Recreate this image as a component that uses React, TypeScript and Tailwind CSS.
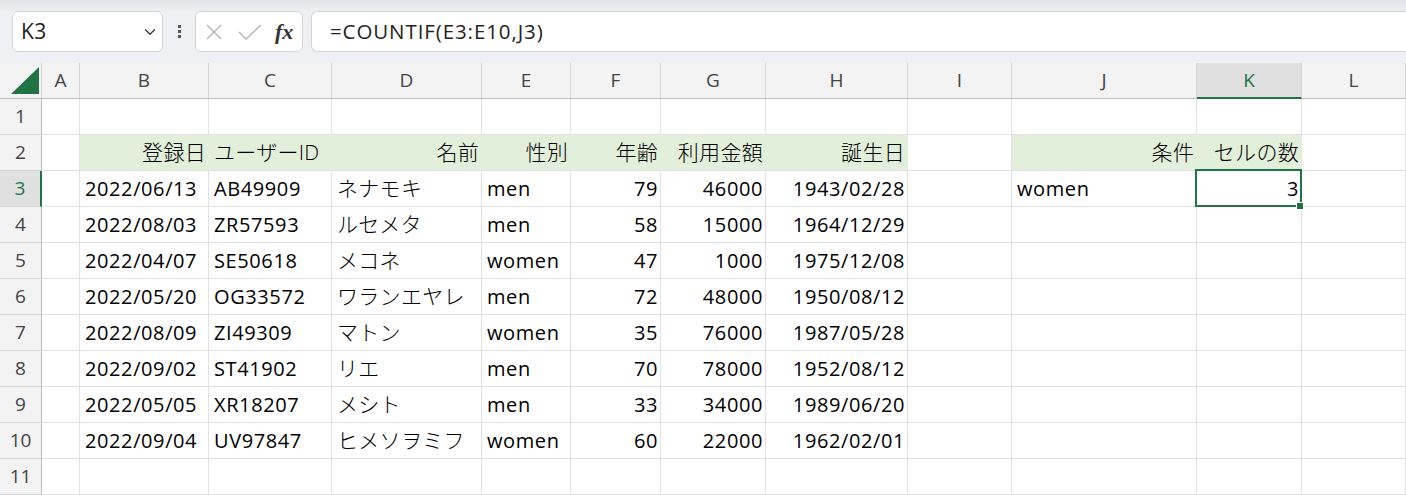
import { ChevronDown } from "lucide-react";

const COLS = ["A", "B", "C", "D", "E", "F", "G", "H", "I", "J", "K", "L"];

type Cell = { v?: string; right?: boolean; fill?: boolean };

const R = (v: string): Cell => ({ v, right: true });
const L = (v: string): Cell => ({ v });

const people: [string, string, string, string, string, string, string][] = [
    ["2022/06/13", "AB49909", "ネナモキ", "men", "79", "46000", "1943/02/28"],
    ["2022/08/03", "ZR57593", "ルセメタ", "men", "58", "15000", "1964/12/29"],
    ["2022/04/07", "SE50618", "メコネ", "women", "47", "1000", "1975/12/08"],
    ["2022/05/20", "OG33572", "ワランエヤレ", "men", "72", "48000", "1950/08/12"],
    ["2022/08/09", "ZI49309", "マトン", "women", "35", "76000", "1987/05/28"],
    ["2022/09/02", "ST41902", "リエ", "men", "70", "78000", "1952/08/12"],
    ["2022/05/05", "XR18207", "メシト", "men", "33", "34000", "1989/06/20"],
    ["2022/09/04", "UV97847", "ヒメソヲミフ", "women", "60", "22000", "1962/02/01"],
];

function buildRows(): Cell[][] {
    const rows: Cell[][] = [];
    rows.push(Array.from({ length: 12 }, () => ({})));
    rows.push([
        {},
        { v: "登録日", right: true, fill: true },
        { v: "ユーザーID", fill: true },
        { v: "名前", right: true, fill: true },
        { v: "性別", right: true, fill: true },
        { v: "年齢", right: true, fill: true },
        { v: "利用金額", right: true, fill: true },
        { v: "誕生日", right: true, fill: true },
        {},
        { v: "条件", right: true, fill: true },
        { v: "セルの数", right: true, fill: true },
        {},
    ]);
    people.forEach((p, i) => {
        const r: Cell[] = [{}, L(p[0]), L(p[1]), L(p[2]), L(p[3]), R(p[4]), R(p[5]), R(p[6]), {}, {}, {}, {}];
        if (i === 0) {
            r[9] = L("women");
            r[10] = R("3");
        }
        rows.push(r);
    });
    rows.push(Array.from({ length: 12 }, () => ({})));
    return rows;
}

const isJa = (s?: string) => !!s && /[\u3000-\u9fff]/.test(s);

const grid = "grid grid-cols-[42px_38px_129px_123px_150px_89px_90px_105px_142px_104px_185px_105px_1fr]";

export default function App() {
    const rows = buildRows();

    return (
        <div className="relative h-[495px] w-[1406px] overflow-hidden bg-white font-['Open_Sans','Noto_Sans_CJK_JP',sans-serif] text-[20px] text-black">
            {/* formula bar */}
            <div className="h-[63px] bg-gradient-to-b from-[#e2e4e8] via-[#eef0f3] via-[20%] to-[#eef0f3] pt-[11px]">
                <div className="flex h-[41px] items-stretch">
                    <div className="ml-[12px] flex w-[151px] items-center justify-between rounded-[6px] border border-[#d4d4d4] bg-white pl-[8px] pr-[3px]">
                        <span className="text-[21px] tracking-[0.4px] text-[#222]">K3</span>
                        <ChevronDown className="size-[18px] text-[#333]" strokeWidth={1.6} />
                    </div>
                    <div className="flex w-[32px] flex-col items-center justify-center gap-[2px]">
                        <span className="size-[3px] bg-[#555]" />
                        <span className="size-[3px] bg-[#555]" />
                        <span className="size-[3px] bg-[#555]" />
                    </div>
                    <div className="flex w-[108px] items-center rounded-[6px] border border-[#d4d4d4] bg-white pl-[9px]">
                        <svg width="18" height="18" viewBox="0 0 18 18" className="mr-[15px]">
                            <path d="M2 2 L16 16 M16 2 L2 16" stroke="#b3b3b3" strokeWidth="1.4" fill="none" />
                        </svg>
                        <svg width="24" height="18" viewBox="0 0 24 18" className="mr-[13px]">
                            <path d="M1 9 L8 16 L23 2" stroke="#b3b3b3" strokeWidth="1.4" fill="none" />
                        </svg>
                        <span className="font-['Liberation_Serif',serif] text-[22px] font-bold italic leading-none text-[#333]">fx</span>
                    </div>
                    <div className="ml-[8px] flex flex-1 items-center rounded-l-[6px] border border-r-0 border-[#d4d4d4] bg-white pl-[18px]">
                        <span className="text-[20.5px] tracking-[0.9px] text-[#222]">=COUNTIF(E3:E10,J3)</span>
                    </div>
                </div>
            </div>

            {/* column headers */}
            <div className={`${grid} h-[36px] border-b border-[#bdbdbd] bg-[#f3f3f3] text-[19px] text-[#444]`}>
                <div className="relative border-r border-[#d6d6d6]">
                    <svg width="42" height="35" viewBox="0 0 42 35" className="absolute inset-0">
                        <polygon points="11,31 39,31 39,4" fill="#217346" />
                    </svg>
                </div>
                {COLS.map((c) =>
                    c === "K" ? (
                        <div key={c} className="-mb-px flex items-center justify-center border-b-2 border-r border-b-[#217346] border-r-[#d6d6d6] bg-[#e0e0e0] text-[#217346]">
                            {c}
                        </div>
                    ) : (
                        <div key={c} className="flex items-center justify-center border-r border-[#d6d6d6]">
                            {c}
                        </div>
                    )
                )}
            </div>

            {/* rows */}
            {rows.map((row, ri) => {
                const n = ri + 1;
                return (
                    <div key={n} className={`${grid} h-[36px]`}>
                        {n === 3 ? (
                            <div className="flex items-center justify-center border-b border-r-2 border-b-[#d6d6d6] border-r-[#217346] bg-[#e0e0e0] text-[19px] text-[#217346]">
                                {n}
                            </div>
                        ) : (
                            <div className="flex items-center justify-center border-b border-r border-b-[#d6d6d6] border-r-[#bdbdbd] bg-[#f3f3f3] text-[19px] text-[#444]">
                                {n}
                            </div>
                        )}
                        {row.map((cell, ci) => {
                            const selected = n === 3 && ci === 10;
                            return (
                                <div
                                    key={ci}
                                    className={`relative flex items-center whitespace-nowrap border-b border-r border-b-[#e1e1e1] ${
                                        cell.fill ? "border-r-[#e2efda] bg-[#e2efda]" : "border-r-[#e1e1e1]"
                                    } ${cell.right ? "justify-end pr-[2px]" : "pl-[5px]"} ${
                                        isJa(cell.v) ? "text-[21px] font-light tracking-[0.3px]" : "tracking-[0.6px]"
                                    }`}
                                >
                                    {cell.v}
                                    {selected && (
                                        <>
                                            <div className="absolute -left-[2px] -top-[2px] h-[38px] w-[107px] border-2 border-[#217346]" />
                                            <div className="absolute -bottom-[4px] -right-[3px] z-10 size-[8px] border border-white bg-[#217346]" />
                                        </>
                                    )}
                                </div>
                            );
                        })}
                    </div>
                );
            })}
        </div>
    );
}
